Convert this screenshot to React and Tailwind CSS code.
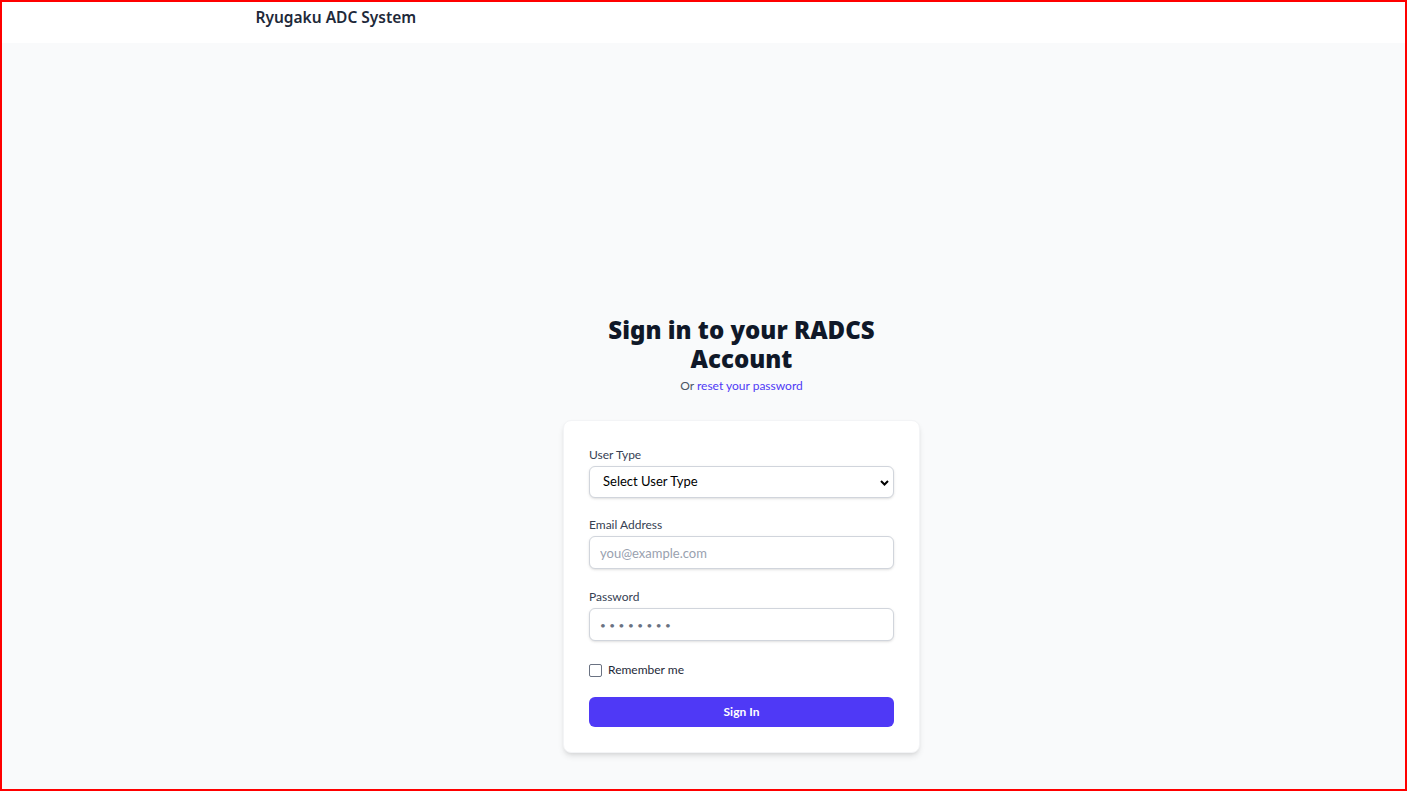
import React from "react";

export default function App() {
  return (
    <div
      className="w-[1407px] h-[791px] border-2 border-[#ff0000] bg-gray-50 overflow-hidden box-border"
      style={{ fontFamily: 'Lato, "Noto Sans", sans-serif' }}
    >
      <header className="bg-white h-[41px]">
        <div className="max-w-4xl mx-auto pt-[3px]">
          <span
            className="text-[15.5px] leading-6 font-semibold text-gray-800"
            style={{ fontFamily: '"Noto Sans", sans-serif' }}
          >
            Ryugaku ADC System
          </span>
        </div>
      </header>
      <main className="flex flex-col items-center pl-[76px] pt-[272px]">
        <h1
          className="w-[300px] text-center text-2xl leading-[29px] font-black text-gray-900"
          style={{ fontFamily: '"Noto Sans", sans-serif' }}
        >
          Sign in to your RADCS Account
        </h1>
        <p className="mt-[5px] text-xs leading-4 text-gray-600">
          Or <a className="text-indigo-600">reset your password</a>
        </p>
        <div className="mt-[26px] w-[357px] bg-white rounded-lg border border-gray-100 shadow-md px-[25px] pt-[25px] pb-[25px]">
          <label className="block pt-[1px] text-xs leading-4 text-gray-700">User Type</label>
          <div className="relative mt-[3px]">
            <select className="block w-full h-[32px] appearance-none rounded-md border border-gray-300 bg-white shadow-sm pl-[13px] pr-8 text-[13px] text-black">
              <option>Select User Type</option>
            </select>
            <svg className="absolute right-[5px] top-[14px] pointer-events-none" width="9" height="6" viewBox="0 0 9 6">
              <path d="M1 1 L4.5 4.5 L8 1" fill="none" stroke="#000" strokeWidth="2" />
            </svg>
          </div>
          <label className="block mt-[18px] pt-[1px] text-xs leading-4 text-gray-700">Email Address</label>
          <input
            type="email"
            placeholder="you@example.com"
            className="mt-[3px] block w-full h-[33px] rounded-md border border-gray-300 bg-white shadow-sm px-[10px] text-[13px] placeholder:text-gray-400"
          />
          <label className="block mt-[19px] pt-[1px] text-xs leading-4 text-gray-700">Password</label>
          <input
            type="password"
            placeholder="••••••••"
            className="mt-[3px] block w-full h-[33px] rounded-md border border-gray-300 bg-white shadow-sm px-[10px] text-[10px] tracking-[3.5px] placeholder:text-gray-500"
          />
          <div className="mt-[21px] flex items-center">
            <span className="block w-[13px] h-[13px] rounded-[2px] border border-gray-500 bg-white"></span>
            <span className="ml-[6px] text-xs leading-4 text-gray-800">Remember me</span>
          </div>
          <button className="mt-[19px] w-full h-[30px] rounded-md bg-[#4f39f6] text-white text-xs font-bold">
            Sign In
          </button>
        </div>
      </main>
    </div>
  );
}
